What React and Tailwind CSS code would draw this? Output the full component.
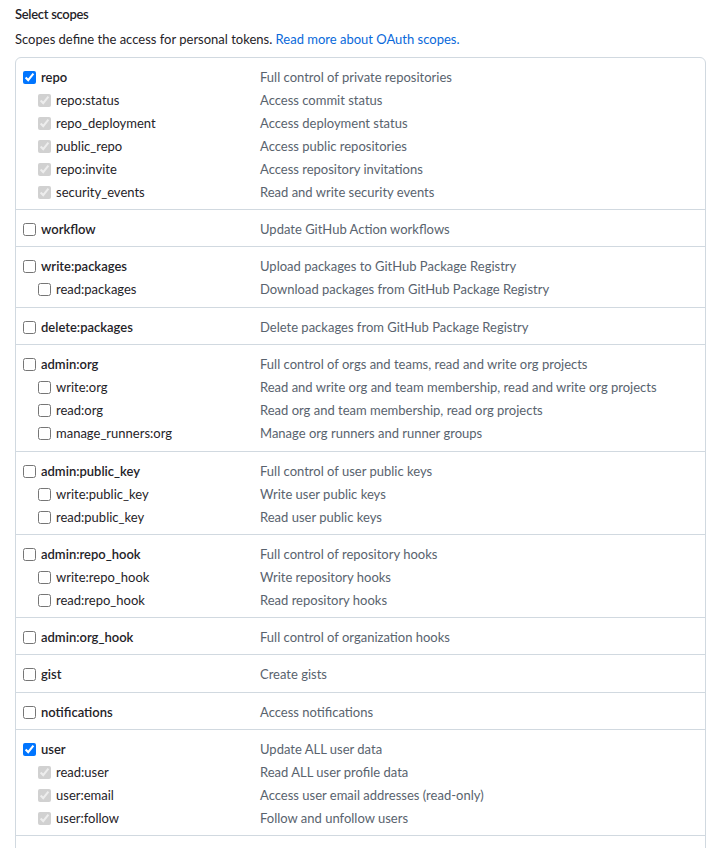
const groups = [
  {
    name: "repo",
    desc: "Full control of private repositories",
    checked: true,
    children: [
      ["repo:status", "Access commit status"],
      ["repo_deployment", "Access deployment status"],
      ["public_repo", "Access public repositories"],
      ["repo:invite", "Access repository invitations"],
      ["security_events", "Read and write security events"],
    ],
  },
  { name: "workflow", desc: "Update GitHub Action workflows", children: [] },
  {
    name: "write:packages",
    desc: "Upload packages to GitHub Package Registry",
    tall: true,
    children: [["read:packages", "Download packages from GitHub Package Registry"]],
  },
  { name: "delete:packages", desc: "Delete packages from GitHub Package Registry", children: [] },
  {
    name: "admin:org",
    desc: "Full control of orgs and teams, read and write org projects",
    tall: true,
    children: [
      ["write:org", "Read and write org and team membership, read and write org projects"],
      ["read:org", "Read org and team membership, read org projects"],
      ["manage_runners:org", "Manage org runners and runner groups"],
    ],
  },
  {
    name: "admin:public_key",
    desc: "Full control of user public keys",
    children: [
      ["write:public_key", "Write user public keys"],
      ["read:public_key", "Read user public keys"],
    ],
  },
  {
    name: "admin:repo_hook",
    desc: "Full control of repository hooks",
    children: [
      ["write:repo_hook", "Write repository hooks"],
      ["read:repo_hook", "Read repository hooks"],
    ],
  },
  { name: "admin:org_hook", desc: "Full control of organization hooks", children: [] },
  { name: "gist", desc: "Create gists", tall: true, children: [] },
  { name: "notifications", desc: "Access notifications", children: [] },
  {
    name: "user",
    desc: "Update ALL user data",
    checked: true,
    children: [
      ["read:user", "Read ALL user profile data"],
      ["user:email", "Access user email addresses (read-only)"],
      ["user:follow", "Follow and unfollow users"],
    ],
  },
  { name: "delete_repo", desc: "Delete repositories", children: [] },
];

function Row({ name, desc, checked, disabled, sub }) {
  return (
    <div className="flex h-[23px] items-center whitespace-nowrap">
      <div className={"flex w-[244px] shrink-0 items-center " + (sub ? "pl-[22px]" : "pl-[7px]")}>
        <input
          type="checkbox"
          className="m-0 h-[13px] w-[13px] shrink-0"
          checked={!!checked}
          disabled={!!disabled}
          readOnly
        />
        <span className={"ml-[5px] text-[#1f2328] " + (sub ? "font-normal" : "font-semibold")}>
          {name}
        </span>
      </div>
      <span className="text-[#59636e]">{desc}</span>
    </div>
  );
}

export default function App() {
  return (
    <div
      className="min-h-screen bg-white pl-[15px] pt-[4px] text-[13px] leading-[21px]"
      style={{ fontFamily: 'Lato, "Liberation Sans", sans-serif' }}
    >
      <h3 className="font-semibold tracking-[-0.3px] text-[#1f2328]">Select scopes</h3>
      <p className="mt-[4px] text-[#1f2328]">
        Scopes define the access for personal tokens.{" "}
        <a className="text-[#0969da]" href="#">
          Read more about OAuth scopes.
        </a>
      </p>
      <div className="mt-[7px] w-[691px] overflow-hidden rounded-[6px] border border-[#d1d9e0]">
        {groups.map((g, i) => (
          <div
            key={g.name}
            className={
              "pt-[8px] " +
              (g.tall ? "pb-[6px] " : "pb-[5px] ") +
              (i > 0 ? "border-t border-[#d1d9e0]" : "")
            }
          >
            <Row name={g.name} desc={g.desc} checked={g.checked} />
            {g.children.map(([n, d]) => (
              <Row
                key={n}
                name={n}
                desc={d}
                sub
                checked={g.checked}
                disabled={g.checked}
              />
            ))}
          </div>
        ))}
      </div>
    </div>
  );
}
